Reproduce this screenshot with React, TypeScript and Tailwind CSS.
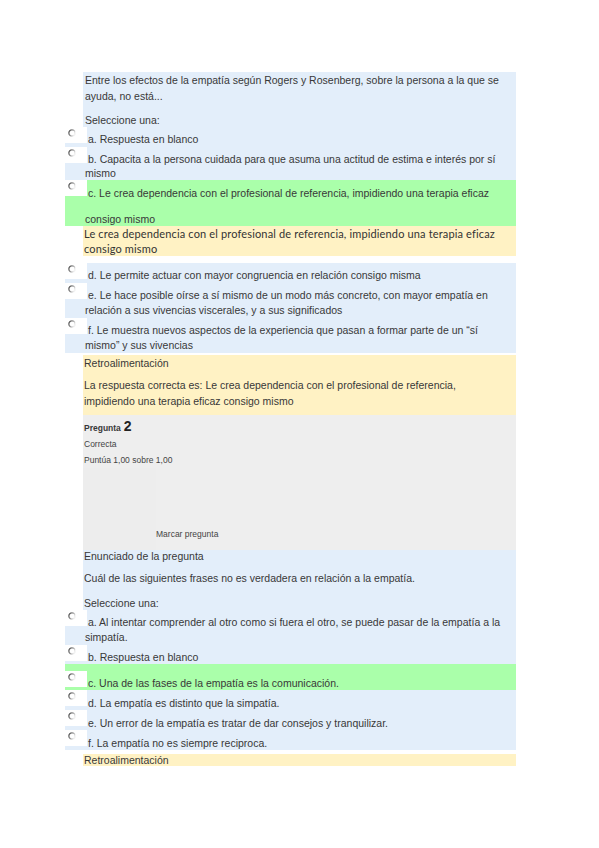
import React from "react";

// radio glyph as it comes out of the pdf: grey ring fading out to the right
const Radio: React.FC = () => (
  <svg width="8" height="8" viewBox="0 0 8 8">
    <defs>
      <linearGradient id="radioStroke" x1="0" y1="0" x2="1" y2="0.5">
        <stop offset="0" stopColor="#444444" />
        <stop offset="0.55" stopColor="#9a9a9a" />
        <stop offset="1" stopColor="#f2f2f2" />
      </linearGradient>
    </defs>
    <circle cx="4" cy="4" r="3.1" fill="#ffffff" stroke="url(#radioStroke)" strokeWidth="1.3" />
  </svg>
);

type OptionProps = {
  children: React.ReactNode;
  rowClass?: string;
  boxClass?: string;
  textClass?: string;
};

const Option: React.FC<OptionProps> = ({
  children,
  rowClass = "bg-[#e3eefa]",
  boxClass = "",
  textClass = "pt-[5px] leading-[15px]",
}) => (
  <div className={`flex items-start ${rowClass}`}>
    <div className={`w-[22px] h-[16px] shrink-0 bg-white flex items-center pl-[3px] pb-[4px] ${boxClass}`}>
      <Radio />
    </div>
    <div className={`flex-1 min-w-0 -ml-[2px] indent-[3px] whitespace-nowrap ${textClass}`}>{children}</div>
  </div>
);

const App: React.FC = () => {
  return (
    <div className="min-h-screen bg-white text-[#383838] text-[10.5px] font-['Liberation_Sans',Arial,sans-serif]">
      <div className="pt-[72px] pl-[65px] w-[516px]">
        {/* Pregunta 1 */}
        <div className="ml-[18px] bg-[#e3eefa] pl-[2px]">
          <div className="leading-[16px]">
            Entre los efectos de la empatía según Rogers y Rosenberg, sobre la persona a la que se
            <br />
            ayuda, no está...
          </div>
          <div className="pt-[9px] leading-[14px]">Seleccione una:</div>
        </div>

        <Option>a. Respuesta en blanco</Option>
        <Option textClass="pt-[5px] leading-[14px]">
          b. Capacita a la persona cuidada para que asuma una actitud de estima e interés por sí
          <br />
          mismo
        </Option>
        <Option rowClass="bg-[#aaffaa]" textClass="pt-[6px] leading-[14px]">
          <div>c. Le crea dependencia con el profesional de referencia, impidiendo una terapia eficaz</div>
          <div className="mt-[12px] indent-0">consigo mismo</div>
        </Option>

        <div className="ml-[18px] bg-[#fff2c4] pl-[1px] leading-[15px] text-[11px] tracking-[0.15px] text-[#333333] font-['Lato',sans-serif]">
          Le crea dependencia con el profesional de referencia, impidiendo una terapia eficaz
          <br />
          consigo mismo
        </div>

        <div className="mt-[7px]">
          <Option>d. Le permite actuar con mayor congruencia en relación consigo misma</Option>
          <Option>
            e. Le hace posible oírse a sí mismo de un modo más concreto, con mayor empatía en
            <br />
            relación a sus vivencias viscerales, y a sus significados
          </Option>
          <Option>
            f. Le muestra nuevos aspectos de la experiencia que pasan a formar parte de un “sí
            <br />
            mismo” y sus vivencias
          </Option>
        </div>

        <div className="mt-[2px] ml-[18px] bg-[#fff2c4] pl-[1px] pb-[6px]">
          <div className="leading-[16px]">Retroalimentación</div>
          <div className="mt-[6px] leading-[16px]">
            La respuesta correcta es: Le crea dependencia con el profesional de referencia,
            <br />
            impidiendo una terapia eficaz consigo mismo
          </div>
        </div>

        {/* Pregunta 2: info */}
        <div className="ml-[18px] bg-[#eeeeee] pt-[3px] text-[8.5px]">
          <div className="pl-[1px] leading-[16px] flex items-baseline gap-[3px]">
            <span className="font-bold">Pregunta</span>
            <span className="text-[14px] font-bold text-[#222222]">2</span>
          </div>
          <div className="pl-[1px] leading-[16px] text-[#444444]">Correcta</div>
          <div className="pl-[1px] leading-[16px] text-[#444444]">Puntúa 1,00 sobre 1,00</div>
          <div className="flex h-[82px]">
            <div className="w-[73px] bg-[#ededed]" />
            <div className="flex-1 flex items-end pb-[9px] leading-[14px] text-[#444444]">Marcar pregunta</div>
          </div>
        </div>

        <div className="ml-[18px] bg-[#e3eefa] pl-[1px]">
          <div className="leading-[12px]">Enunciado de la pregunta</div>
          <div className="mt-[9px] leading-[14px]">Cuál de las siguientes frases no es verdadera en relación a la empatía.</div>
          <div className="mt-[11px] leading-[14px]">Seleccione una:</div>
        </div>

        <Option>
          a. Al intentar comprender al otro como si fuera el otro, se puede pasar de la empatía a la
          <br />
          simpatía.
        </Option>
        <Option textClass="pt-[5px] leading-[14px]">b. Respuesta en blanco</Option>
        <Option rowClass="bg-[#aaffaa]" boxClass="mt-[7px]" textClass="pt-[12px] leading-[14px]">
          c. Una de las fases de la empatía es la comunicación.
        </Option>
        <Option textClass="pt-[6px] leading-[14px]">d. La empatía es distinto que la simpatía.</Option>
        <Option textClass="pt-[6px] leading-[14px]">e. Un error de la empatía es tratar de dar consejos y tranquilizar.</Option>
        <Option textClass="pt-[6px] leading-[14px]">f. La empatía no es siempre reciproca.</Option>

        <div className="mt-[4px] ml-[18px] bg-[#fff2c4] pl-[1px] leading-[12px]">Retroalimentación</div>
      </div>
    </div>
  );
};

export default App;
